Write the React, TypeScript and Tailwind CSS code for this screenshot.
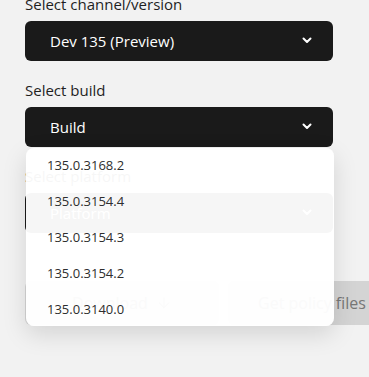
import { ArrowDown } from "lucide-react";

const builds = ["135.0.3168.2", "135.0.3154.4", "135.0.3154.3", "135.0.3154.2", "135.0.3140.0"];

function Chevron() {
  return (
    <svg width="10" height="7" viewBox="0 0 10 7" fill="none" className="mb-[1px]">
      <path d="M1.5 1.5l3.5 3.5 3.5-3.5" stroke="currentColor" strokeWidth="2" strokeLinecap="round" strokeLinejoin="round" />
    </svg>
  );
}

function Field({
  label,
  value,
  open,
}: {
  label: string;
  value: string;
  open?: boolean;
}) {
  return (
    <div className={open ? "relative z-10 flex flex-col gap-[7px]" : "flex flex-col gap-[7px]"}>
      <span className="text-[15px] leading-5 text-[#1f1f1f]">{label}</span>
      <div className="relative">
        <button className="flex h-10 w-[308px] items-center justify-between rounded-md bg-[#1a1a1a] pl-[25px] pr-[21px] text-[15px] font-medium text-white">
          <span>{value}</span>
          <Chevron />
        </button>
        {open && (
          <div className="absolute left-[1px] top-[41px] h-[178px] w-[308px] overflow-hidden rounded-lg bg-white/[0.96] shadow-[0_8px_24px_rgba(0,0,0,0.13)]">
            {builds.map((b) => (
              <div key={b} className="flex h-9 items-center pl-[21px] text-[13px] text-[#2e2e2e]">
                {b}
              </div>
            ))}
          </div>
        )}
      </div>
    </div>
  );
}

export default function App() {
  return (
    <div
      className="h-[377px] w-[369px] overflow-hidden bg-[#f2f2f2]"
      style={{ fontFamily: '"Open Sans", "Noto Sans", sans-serif' }}
    >
      <div className="-mt-[6px] flex flex-col gap-[19px] pl-[25px]">
        <Field label="Select channel/version" value="Dev 135 (Preview)" />
        <Field label="Select build" value="Build" open />
        <Field label="Select platform" value="Platform" />
        <div className="mt-[29px] flex gap-[9px]">
          <button className="flex h-11 w-[194px] shrink-0 items-center justify-center gap-2 rounded-md bg-[#d4d4d4] text-[16px] text-[#777]">
            Download
            <ArrowDown size={16} strokeWidth={1.5} />
          </button>
          <button className="flex h-11 w-[168px] shrink-0 items-center justify-center rounded-md bg-[#d4d4d4] text-[16px] text-[#777]">
            Get policy files
          </button>
        </div>
      </div>
    </div>
  );
}
